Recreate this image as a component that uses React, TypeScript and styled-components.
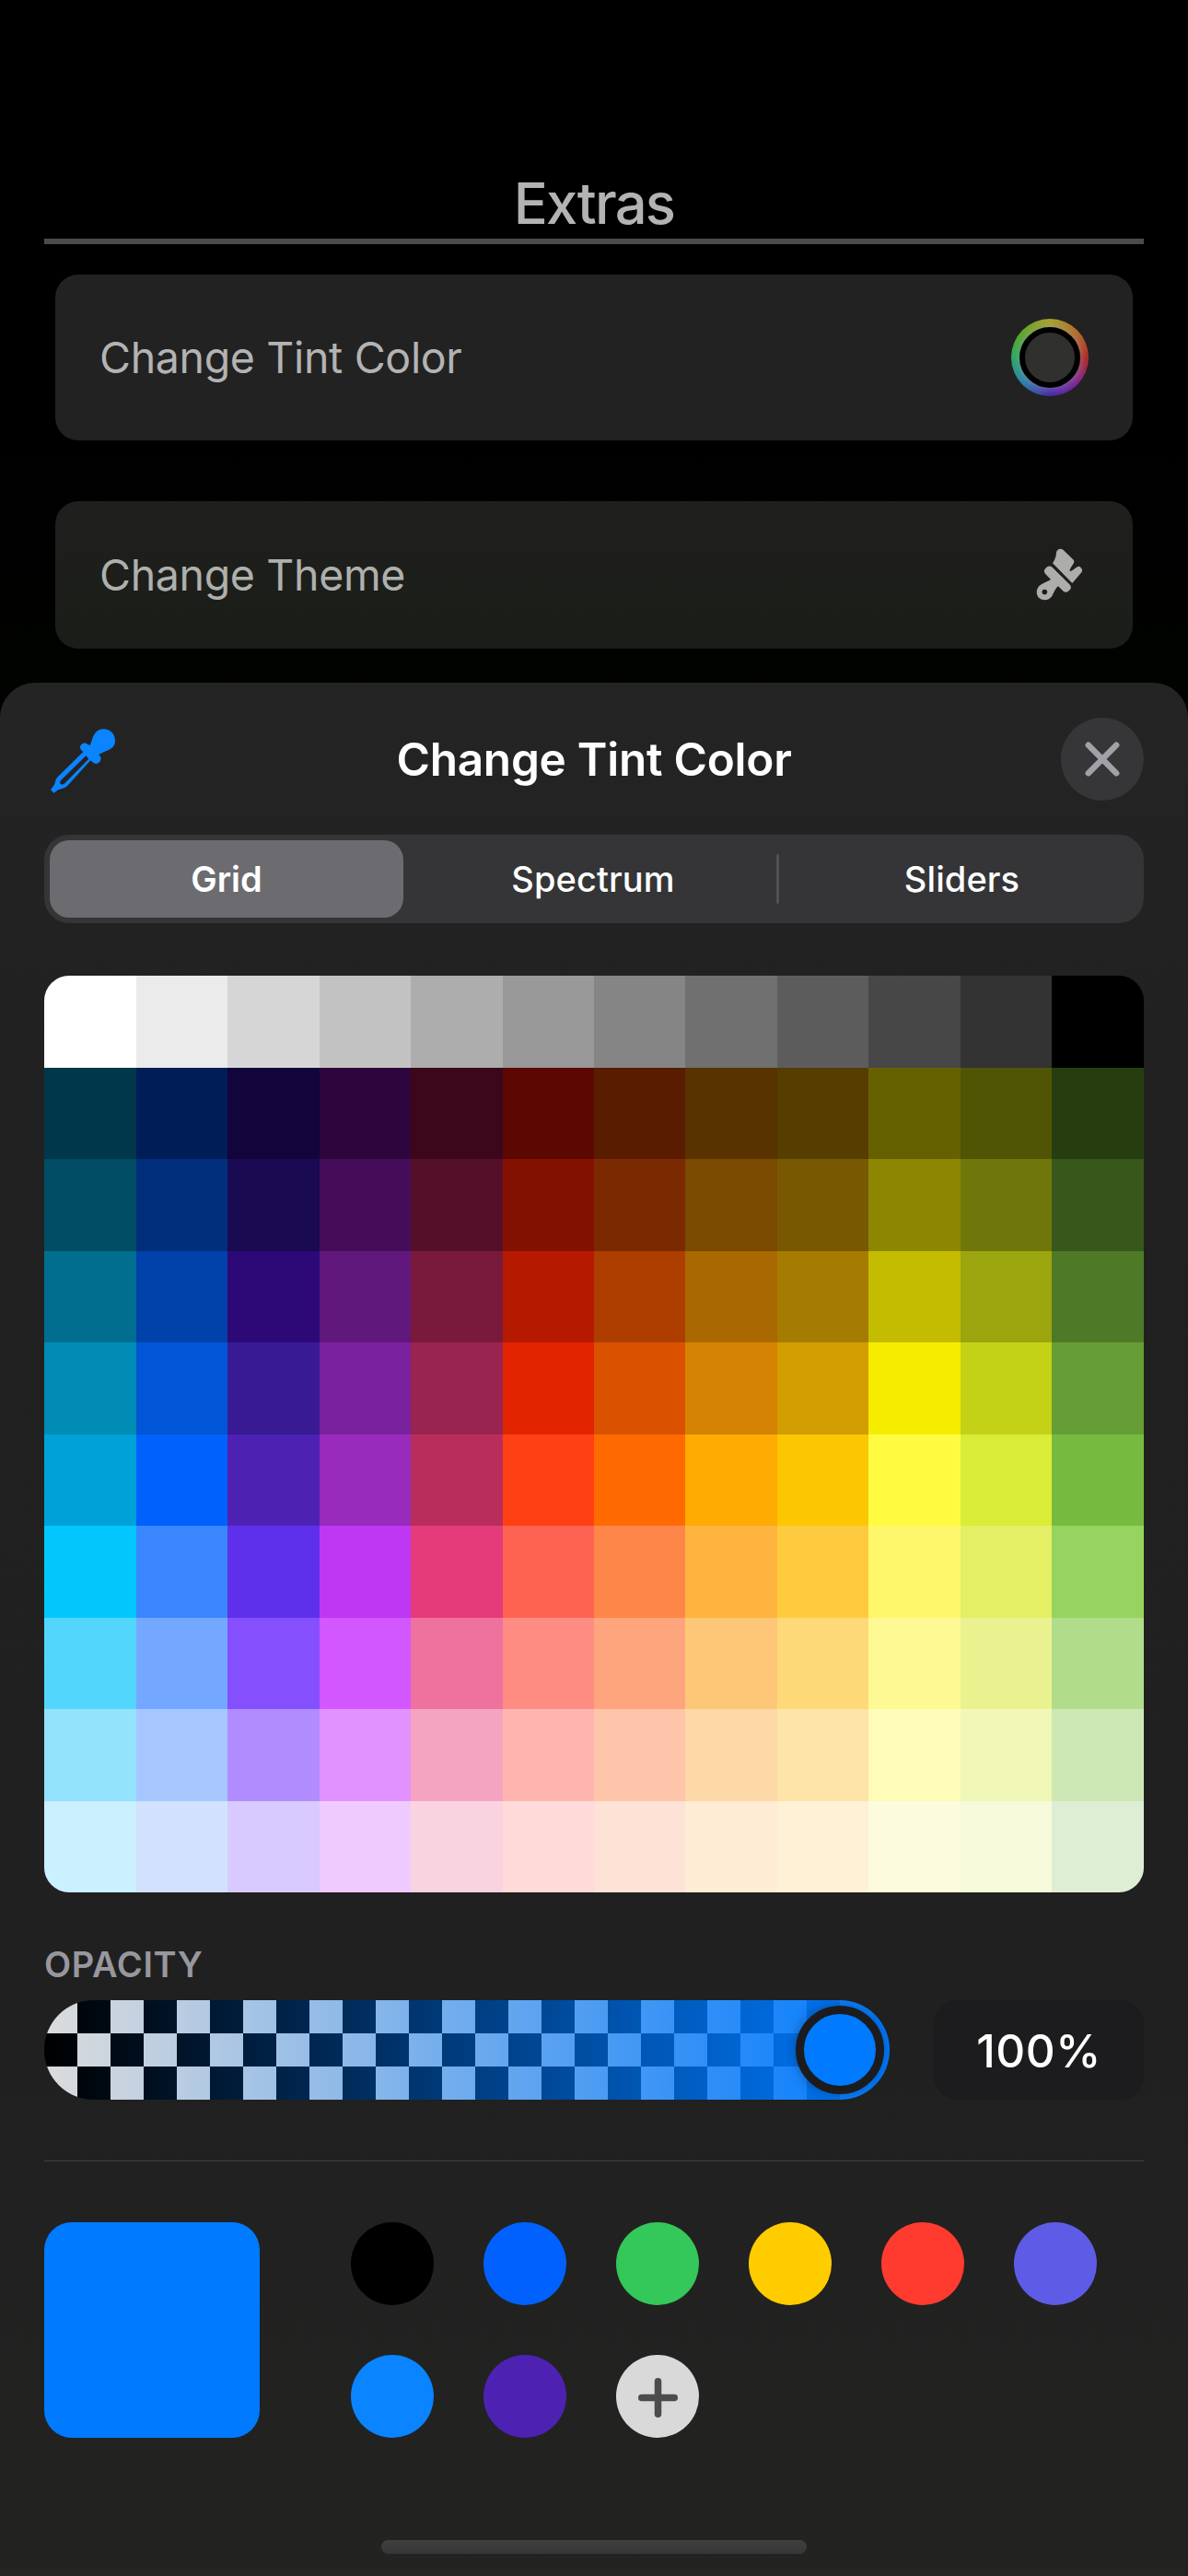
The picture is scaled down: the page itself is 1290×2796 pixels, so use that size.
import React from "react";
import styled, { createGlobalStyle } from "styled-components";

const GlobalStyle = createGlobalStyle`
  * { box-sizing: border-box; }
  body { margin: 0; background: #000; }
`;

const Screen = styled.main`
  display: flex;
  flex-direction: column;
  width: 1290px;
  height: 2796px;
  overflow: hidden;
  background: linear-gradient(#000 0, #000 500px, #010300 741px);
  font-family: Inter, Roboto, "Liberation Sans", sans-serif;
`;

const Extras = styled.section`
  flex: none;
  height: 741px;
  padding: 185px 48px 0;
`;

const ExtrasTitle = styled.h1`
  margin: 0;
  height: 80px;
  border-bottom: 6px solid #4c4b4c;
  color: #b3b3b3;
  font-size: 61.5px;
  font-weight: 500;
  line-height: 71px;
  letter-spacing: -1.75px;
  text-align: center;
`;

const OptionList = styled.div`
  display: flex;
  flex-direction: column;
  gap: 66px;
  padding: 33px 12px 0;
`;

const OptionCard = styled.div<{ $height: number; $background: string }>`
  display: flex;
  align-items: center;
  justify-content: space-between;
  height: ${(p) => p.$height}px;
  padding: 0 48px;
  border-radius: 25px;
  background: ${(p) => p.$background};
`;

const OptionLabel = styled.span<{ $color: string }>`
  color: ${(p) => p.$color};
  font-size: 46.5px;
  font-weight: 400;
  letter-spacing: -0.34px;
`;

const ColorWheel = styled.div`
  display: grid;
  place-items: center;
  width: 84px;
  height: 84px;
  border-radius: 50%;
  background:
    radial-gradient(circle closest-side, rgba(150, 150, 150, 0.4) 76%, rgba(150, 150, 150, 0) 94%),
    conic-gradient(#a8a22c, #b3702a 45deg, #b02a2a 92deg, #7c2799 135deg, #4a2aab 178deg, #2a86ab 230deg, #2aa868 268deg, #5aa82a 308deg, #a8a22c);
`;

const WheelCenter = styled.div`
  width: 66px;
  height: 66px;
  border: 6px solid #000;
  border-radius: 50%;
  background: #30302f;
`;

const BrushSlot = styled.div`
  display: flex;
  margin-right: 5px;
`;

const Sheet = styled.section`
  display: flex;
  flex: 1;
  flex-direction: column;
  padding: 38px 48px 0;
  border-radius: 38px 38px 0 0;
  background: linear-gradient(#242424, #212121 20%, #202020 70%, #232322);
`;

const SheetHeader = styled.header`
  display: grid;
  grid-template-columns: 90px 1fr 90px;
  align-items: center;
  height: 90px;
`;

const PickerButton = styled.button`
  display: flex;
  padding: 3px 0 0 7px;
  border: 0;
  background: none;
`;

const SheetTitle = styled.h2`
  margin: 0;
  color: #fff;
  font-size: 49.5px;
  font-weight: 600;
  line-height: 60px;
  letter-spacing: -0.25px;
  text-align: center;
`;

const CloseButton = styled.button`
  display: grid;
  place-items: center;
  width: 90px;
  height: 90px;
  padding: 0;
  border: 0;
  border-radius: 50%;
  background: #363638;
`;

const Segments = styled.div`
  display: grid;
  grid-template-columns: 384px 405px 3px 1fr;
  align-items: center;
  height: 96px;
  margin-top: 37px;
  padding: 6px;
  border-radius: 27px;
  background: #353537;
`;

const Segment = styled.button<{ $selected?: boolean }>`
  height: 84px;
  padding: 0 0 0 ${(p) => (p.$selected ? 0 : 7)}px;
  border: 0;
  border-radius: 21px;
  background: ${(p) => (p.$selected ? "#6c6b70" : "transparent")};
  color: #fff;
  font-family: inherit;
  font-size: 38px;
  font-weight: ${(p) => (p.$selected ? 600 : 500)};
  letter-spacing: ${(p) => (p.$selected ? 0 : 0.1)}px;
`;

const SegmentDivider = styled.div`
  height: 54px;
  border-radius: 2px;
  background: #505055;
`;

const ColorGrid = styled.div`
  display: grid;
  grid-template-columns: repeat(3, 100px 99px) repeat(3, 99px 100px);
  grid-template-rows: repeat(10, 1fr);
  flex: none;
  height: 995px;
  margin-top: 57px;
  overflow: hidden;
  border-radius: 27px;
`;

const Cell = styled.div<{ $color: string }>`
  background: ${(p) => p.$color};
`;

const OpacityLabel = styled.h3`
  margin: 54px 0 0;
  height: 63px;
  color: #98979e;
  font-size: 38px;
  font-weight: 600;
  line-height: 48px;
  letter-spacing: 0.65px;
`;

const OpacityRow = styled.div`
  display: flex;
  gap: 48px;
  height: 108px;
`;

const Track = styled.div`
  display: flex;
  align-items: center;
  justify-content: flex-end;
  width: 918px;
  padding-right: 6px;
  overflow: hidden;
  border-radius: 54px;
  background:
    linear-gradient(90deg, rgba(0, 122, 255, 0), #007aff),
    repeating-conic-gradient(#000 0 25%, #dcdcdc 0 50%) 0 0 / 72px 72px;
`;

const Thumb = styled.div`
  width: 96px;
  height: 96px;
  border: 9px solid #1c1c1e;
  border-radius: 50%;
  background: #007aff;
  box-shadow: 0 0 14px rgba(0, 0, 0, 0.3);
`;

const OpacityValue = styled.div`
  display: grid;
  flex: 1;
  place-items: center;
  padding-top: 2px;
  border-radius: 25px;
  background: #1c1c1e;
  color: #fff;
  font-size: 49.5px;
  font-weight: 500;
  letter-spacing: 0.5px;
`;

const Rule = styled.hr`
  width: 100%;
  height: 1px;
  margin: 66px 0;
  border: 0;
  background: #434343;
`;

const SwatchRow = styled.div`
  display: flex;
  gap: 99px;
`;

const CurrentColor = styled.div`
  width: 234px;
  height: 234px;
  border-radius: 30px;
  background: #007aff;
`;

const SwatchGrid = styled.div`
  display: grid;
  grid-template-columns: repeat(6, 90px);
  gap: 54px;
`;

const Swatch = styled.button<{ $color: string }>`
  display: grid;
  place-items: center;
  width: 90px;
  height: 90px;
  padding: 3px 0 0;
  border: 0;
  border-radius: 50%;
  background: ${(p) => p.$color};
`;

const HomeIndicator = styled.div`
  align-self: center;
  width: 462px;
  height: 15px;
  margin-top: 111px;
  border-radius: 8px;
  background: linear-gradient(#404040, #363636);
`;

const gridColors = [
  "FFFFFF EBEBEB D6D6D6 C2C2C2 ADADAD 999999 858585 707070 5C5C5C 474747 333333 000000",
  "00374A 011D57 11053B 2E063D 3C071B 5C0701 5A1C00 583300 563D00 666100 4F5504 263E0F",
  "004D65 012F7B 1A0A52 450D59 551029 831100 7B2900 7A4A00 785800 8D8602 6F760A 38571A",
  "016E8F 0042A9 2C0977 61187C 791A3D B51A00 AD3E00 A96800 A67B01 C4BC00 9BA50E 4E7A27",
  "008CB4 0056D6 371A94 7A219E 99244F E22400 DA5100 D38301 D19D01 F5EC00 C3D117 669D34",
  "00A1D8 0061FD 4D22B2 982ABC B92D5D FF4015 FF6A00 FFAB01 FCC700 FEFB41 D9EC37 76BB40",
  "01C7FC 3A87FD 5E30EB BE38F3 E63B7A FE6250 FE8648 FEB43F FECB3E FFF76B E4EF65 96D35F",
  "52D6FC 74A7FF 864FFD D357FE EE719E FF8C82 FEA57D FEC777 FED977 FFF994 EAF28F B1DD8B",
  "93E3FC A7C6FF B18CFE E292FE F4A4C0 FFB5AF FFC5AB FED9A8 FDE4A8 FFFBB9 F1F7B7 CDE8B5",
  "CBF0FF D2E2FE D8C9FE EFCAFE F9D3E0 FFDAD8 FFE2D6 FEECD4 FEF1D5 FDFBDD F6FADB DEEED4",
].flatMap((row) => row.split(" ").map((hex) => `#${hex}`));

const savedColors = [
  "#000000",
  "#0061fe",
  "#34c759",
  "#ffcc00",
  "#ff3b30",
  "#5e5ce6",
  "#0a84ff",
  "#4d22b2",
];

const BrushIcon = () => (
  <svg width="52" height="58" viewBox="76 76 156 174" fill="#adaeac">
    <path d="M130 125C138 112 141 105 142 91C143 79 156 74 165 82L196 112Q202 118 199 124C195 132 184 145 186 151C190 153 202 142 210 137Q216 133 221 138L224 142Q229 148 224 155L194 190Z" />
    <path
      fillRule="evenodd"
      d="M106 143L112 137Q121 131 129 138L185 194Q193 202 187 210L181 216Q173 222 165 216L148 200C142 203 136 217 128 232C118 247 98 248 86 238C74 226 76 206 90 196C103 187 120 182 124 178L106 159Q99 151 106 143ZM104 210A8.500 8.500 0 1 0 104 227A8.500 8.500 0 1 0 104 210Z"
    />
  </svg>
);

const EyedropperIcon = () => (
  <svg width="70" height="70" viewBox="75 91 210 210" fill="#0a84ff">
    <path d="M203 145C211 132 212 92 248 92C270 92 285 109 285 130C285 163 246 162 232 176L237 182C244 197 226 212 214 202L205 194L130 276C120 286 106 286 97 291L86 300L75 290L86 275C91 268 88 258 98 248L181 166L174 160C164 147 181 131 195 141Z" />
    <path fill="#232323" d="M190 179L109 258C99 268 111 278 121 269L199 189Z" />
  </svg>
);

export default function App() {
  return (
    <Screen>
      <GlobalStyle />
      <Extras>
        <ExtrasTitle>Extras</ExtrasTitle>
        <OptionList>
          <OptionCard $height={180} $background="#222222">
            <OptionLabel $color="#b3b3b3">Change Tint Color</OptionLabel>
            <ColorWheel>
              <WheelCenter />
            </ColorWheel>
          </OptionCard>
          <OptionCard $height={160} $background="linear-gradient(#1f201e, #1b1d18)">
            <OptionLabel $color="#aeb0ad">Change Theme</OptionLabel>
            <BrushSlot>
              <BrushIcon />
            </BrushSlot>
          </OptionCard>
        </OptionList>
      </Extras>
      <Sheet>
        <SheetHeader>
          <PickerButton aria-label="Pick a color">
            <EyedropperIcon />
          </PickerButton>
          <SheetTitle>Change Tint Color</SheetTitle>
          <CloseButton aria-label="Close">
            <svg width="38" height="38" viewBox="0 0 38 38" stroke="#a1a1a8" strokeWidth="6.500" strokeLinecap="round">
              <path d="M3.800 3.800L34.200 34.200M34.200 3.800L3.800 34.200" />
            </svg>
          </CloseButton>
        </SheetHeader>
        <Segments>
          <Segment $selected>Grid</Segment>
          <Segment>Spectrum</Segment>
          <SegmentDivider />
          <Segment>Sliders</Segment>
        </Segments>
        <ColorGrid>
          {gridColors.map((color, i) => (
            <Cell key={i} $color={color} />
          ))}
        </ColorGrid>
        <OpacityLabel>OPACITY</OpacityLabel>
        <OpacityRow>
          <Track>
            <Thumb />
          </Track>
          <OpacityValue>100%</OpacityValue>
        </OpacityRow>
        <Rule />
        <SwatchRow>
          <CurrentColor />
          <SwatchGrid>
            {savedColors.map((color) => (
              <Swatch key={color} $color={color} />
            ))}
            <Swatch $color="#d9d9d9" aria-label="Add color">
              <svg width="43" height="43" viewBox="0 0 43 43" stroke="#4c4c4c" strokeWidth="7.500" strokeLinecap="round">
                <path d="M21.500 3.750V39.250M3.750 21.500H39.250" />
              </svg>
            </Swatch>
          </SwatchGrid>
        </SwatchRow>
        <HomeIndicator />
      </Sheet>
    </Screen>
  );
}
